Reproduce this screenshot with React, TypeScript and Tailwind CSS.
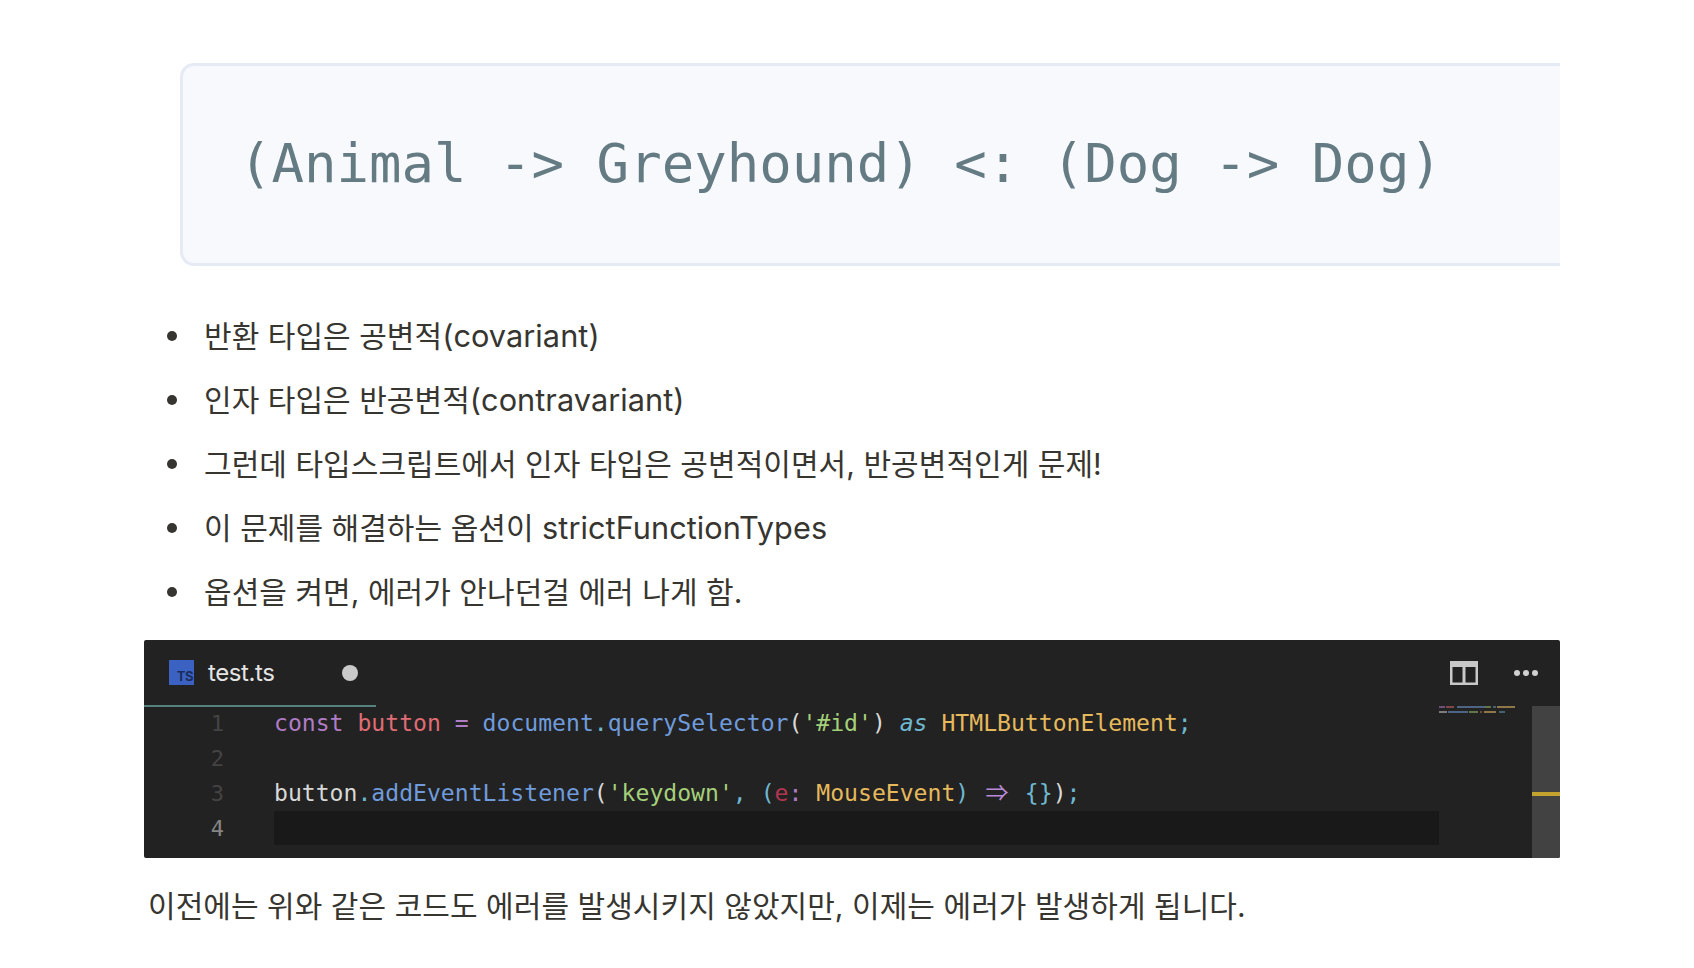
import type { ReactNode } from "react"

const bodyFont = "font-['Inter','Noto_Sans_CJK_KR',sans-serif]"
const monoFont = "font-['DejaVu_Sans_Mono','Noto_Sans_CJK_KR',monospace]"

// 라틴 글자만 조금 크게 (레퍼런스 폭에 맞춤)
function Latin({ children }: { children: ReactNode }) {
    return <span className="text-[30.7px]">{children}</span>
}

const bullets: { id: number; text: ReactNode }[] = [
    { id: 1, text: <>반환 타입은 공변적<Latin>(covariant)</Latin></> },
    { id: 2, text: <>인자 타입은 반공변적<Latin>(contravariant)</Latin></> },
    { id: 3, text: "그런데 타입스크립트에서 인자 타입은 공변적이면서, 반공변적인게 문제!" },
    { id: 4, text: <>이 문제를 해결하는 옵션이 <Latin>strictFunctionTypes</Latin></> },
    { id: 5, text: "옵션을 켜면, 에러가 안나던걸 에러 나게 함." },
]

function TsIcon() {
    return (
        <div className="w-[25px] h-[25px] bg-[#3b62c2] flex items-end justify-end pr-[1px] pb-[2px]">
            <span className="text-[13px] leading-[13px] font-bold tracking-[-0.5px] text-[#1b2d5c]">TS</span>
        </div>
    )
}

function SplitIcon() {
    return (
        <svg width="28" height="24" viewBox="0 0 28 24" fill="none">
            <path d="M0 0H28V24H0Z M2.5 6V21.5H12.5V6Z M15.5 6V21.5H25.5V6Z" fill="#c8c8c8" fillRule="evenodd" />
        </svg>
    )
}

function Minimap() {
    return (
        <svg width="76" height="7" viewBox="0 0 76 7" className="opacity-60">
            <rect x="0" y="0" width="6" height="2" fill="#a070b8" />
            <rect x="7" y="0" width="8" height="2" fill="#c0605f" />
            <rect x="18" y="0" width="28" height="2" fill="#6a90c8" />
            <rect x="46" y="0" width="6" height="2" fill="#8fae60" />
            <rect x="54" y="0" width="3" height="2" fill="#5c8fa8" />
            <rect x="58" y="0" width="18" height="2" fill="#d8b060" />
            <rect x="0" y="5" width="8" height="2" fill="#b8b8b8" />
            <rect x="9" y="5" width="20" height="2" fill="#6a90c8" />
            <rect x="30" y="5" width="9" height="2" fill="#8fae60" />
            <rect x="41" y="5" width="2" height="2" fill="#c0605f" />
            <rect x="45" y="5" width="12" height="2" fill="#d8b060" />
            <rect x="60" y="5" width="6" height="2" fill="#5c8fa8" />
        </svg>
    )
}

function EditorPanel() {
    return (
        <section className={`relative h-[218px] bg-[#222222] rounded-[2px] overflow-hidden ${monoFont}`}>
            {/* 탭 바 */}
            <div className="h-[67px] flex items-stretch justify-between">
                <div className={`w-[232px] border-b-2 border-[#55827f] pl-[25px] flex items-center ${bodyFont}`}>
                    <TsIcon />
                    <span className="ml-[14px] mt-[1px] text-[24px] tracking-[-0.4px] text-[#e4e4e4]">test.ts</span>
                    <span className="ml-[67px] w-[16px] h-[16px] rounded-full bg-[#c9c9c9]" />
                </div>
                <div className="flex items-center gap-[36px] pr-[22px] pb-[1px]">
                    <SplitIcon />
                    <div className="flex gap-[3px] pb-[1px]">
                        <span className="w-[6px] h-[6px] rounded-full bg-[#d0d0d0]" />
                        <span className="w-[6px] h-[6px] rounded-full bg-[#d0d0d0]" />
                        <span className="w-[6px] h-[6px] rounded-full bg-[#d0d0d0]" />
                    </div>
                </div>
            </div>

            {/* 코드 영역 */}
            <div className="flex -mt-[1px]">
                <div className="w-[130px] shrink-0 text-[22px] leading-[35px] text-right pr-[50px] text-[#444444]">
                    <div>1</div>
                    <div>2</div>
                    <div>3</div>
                    <div className="text-[#858585]">4</div>
                </div>
                <div className="w-[1165px] shrink-0 text-[23.1px] leading-[35px] whitespace-pre text-[#d8d8d8]">
                    <div className="h-[35px]">
                        <span className="text-[#b07cc6]">const</span> <span className="text-[#e06c75]">button</span>{" "}
                        <span className="text-[#b07cc6]">=</span> <span className="text-[#6f9bdc]">document</span>
                        <span className="text-[#6fb8d0]">.</span><span className="text-[#6f9bdc]">querySelector</span>(
                        <span className="text-[#a5d07a]">'#id'</span>) <span className="italic text-[#6fb8d0]">as</span>{" "}
                        <span className="text-[#e5b95c]">HTMLButtonElement</span><span className="text-[#6fb8d0]">;</span>
                    </div>
                    <div className="h-[35px]">&nbsp;</div>
                    <div className="h-[35px]">
                        button<span className="text-[#6fb8d0]">.</span><span className="text-[#6f9bdc]">addEventListener</span>(
                        <span className="text-[#a5d07a]">'keydown'</span><span className="text-[#6fb8d0]">,</span>{" "}
                        <span className="text-[#6fb8d0]">(</span>
                        <span className="text-[#b0364f]">e</span><span className="text-[#b07cc6]">:</span>{" "}
                        <span className="text-[#e5b95c]">MouseEvent</span><span className="text-[#6fb8d0]">)</span>{" "}
                        <span className="inline-block w-[27.8px] text-center leading-none font-['Noto_Sans_CJK_KR',sans-serif] text-[#b98ad8]">⇒</span>{" "}
                        <span className="text-[#6fb8d0]">{"{}"}</span>)<span className="text-[#6fb8d0]">;</span>
                    </div>
                    <div className="h-[34px] bg-[#191919]" />
                </div>
                <div className="w-[76px] shrink-0">
                    <Minimap />
                </div>
            </div>

            {/* 스크롤바 */}
            <div className="absolute right-0 top-[66px] bottom-0 w-[28px] bg-[#424242]">
                <div className="mt-[86px] h-[4px] bg-[#c4a22e]" />
            </div>
        </section>
    )
}

export default function App() {
    return (
        <main className={`w-full h-[968px] overflow-hidden bg-white pt-[63px] pl-[144px] pr-[134px] text-[#37352f] ${bodyFont}`}>
            {/* 1. 타입 관계 코드 블록 */}
            <pre className={`ml-[36px] h-[203px] flex items-center pl-[56px] pb-[3px] bg-[#f7f9fc] border-[3px] border-r-0 border-[#e6eaf5] rounded-l-[14px] text-[54px] text-[#657b83] ${monoFont}`}>
                (Animal -&gt; Greyhound) &lt;: (Dog -&gt; Dog)
            </pre>

            {/* 2. 설명 목록 */}
            <ul className="mt-[38px] flex flex-col">
                {bullets.map((item) => (
                    <li key={item.id} className="h-[64px] flex items-center text-[30px] tracking-[0.05px]">
                        <span className="ml-[23px] mr-[27px] w-[10px] h-[10px] rounded-full bg-[#37352f]" />
                        <span>{item.text}</span>
                    </li>
                ))}
            </ul>

            {/* 3. 에디터 캡처 */}
            <div className="mt-[16px]">
                <EditorPanel />
            </div>

            {/* 4. 맺음말 */}
            <p className="mt-[26px] ml-[4px] text-[30px] leading-[44px] tracking-[0.05px]">
                이전에는 위와 같은 코드도 에러를 발생시키지 않았지만, 이제는 에러가 발생하게 됩니다.
            </p>
        </main>
    )
}
